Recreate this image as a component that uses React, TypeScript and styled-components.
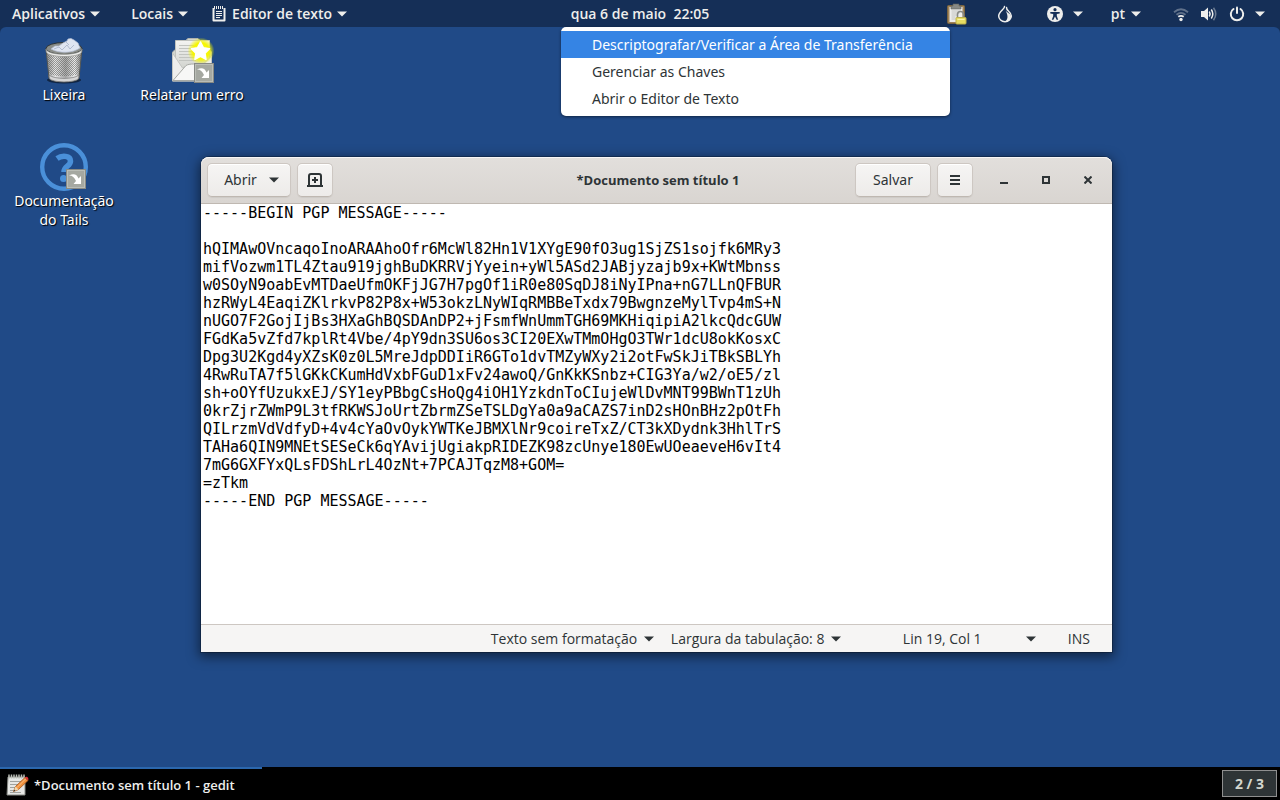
import React, { useState } from "react";
import styled, { createGlobalStyle, css } from "styled-components";

const GlobalStyle = createGlobalStyle`
  *, *::before, *::after { box-sizing: border-box; }
  body {
    margin: 0;
    background: #000;
    font-family: "Noto Sans", "Open Sans", sans-serif;
    font-size: 14px;
    line-height: 18px;
    color: #2e3436;
  }
  button, textarea { font: inherit; color: inherit; }
  svg { display: block; flex: none; }
`;

const Screen = styled.div`
  display: flex;
  flex-direction: column;
  min-height: 100vh;
  background: #152f57;
  overflow: hidden;
`;

/* ---------- top bar ---------- */

const TopBar = styled.header`
  display: grid;
  grid-template-columns: 1fr auto 1fr;
  height: 27px;
  color: #eeeeec;
  font-family: "Open Sans", "Noto Sans", sans-serif;
  font-weight: 600;
  text-shadow: 0 1px 2px rgba(0, 0, 0, 0.7);
`;

const BarGroup = styled.div<{ $end?: boolean }>`
  display: flex;
  justify-content: ${(p) => (p.$end ? "flex-end" : "flex-start")};
`;

const BarButton = styled.button<{ $before?: number; $after?: number; $gap?: number }>`
  display: flex;
  align-items: center;
  gap: ${(p) => p.$gap ?? 5}px;
  padding: 0 ${(p) => p.$after ?? 16}px 0 ${(p) => p.$before ?? 12}px;
  border: 0;
  background: none;
  white-space: nowrap;
`;

const StatusIcons = styled.span`
  display: flex;
  gap: 12px;
`;

/* ---------- desktop ---------- */

const Desktop = styled.main`
  position: relative;
  flex: 1;
  background: #204a87;
  border-radius: 6px 6px 0 0;
`;

const IconGrid = styled.div`
  display: grid;
  grid-template-columns: repeat(2, 128px);
  grid-auto-rows: 106px;
  padding-top: 10px;
`;

const Shortcut = styled.button`
  display: flex;
  flex-direction: column;
  align-items: center;
  padding: 0;
  border: 0;
  background: none;
  color: #fff;
  line-height: 19px;
  text-shadow: 1px 1px 1px #000;
`;

const ShortcutLabel = styled.span`
  max-width: 112px;
`;

const Menu = styled.div`
  position: absolute;
  top: 0;
  right: 330px;
  z-index: 2;
  width: 389px;
  padding: 4px 0;
  background: #fff;
  border-radius: 5px;
  box-shadow: 0 1px 3px rgba(0, 0, 0, 0.5);
`;

const MenuItem = styled.button<{ $active: boolean }>`
  display: block;
  width: 100%;
  height: 27px;
  padding: 0 31px;
  border: 0;
  text-align: left;
  background: ${(p) => (p.$active ? "#3584e4" : "transparent")};
  color: ${(p) => (p.$active ? "#fff" : "#2e3436")};
`;

/* ---------- editor window ---------- */

const Window = styled.section`
  position: absolute;
  top: 130px;
  left: 201px;
  right: 168px;
  display: flex;
  flex-direction: column;
  border-radius: 8px 8px 0 0;
  background: #fff;
  box-shadow: 0 0 0 1px rgba(0, 0, 0, 0.25), 0 3px 12px 2px rgba(0, 0, 0, 0.5);
`;

const HeaderBar = styled.header`
  display: grid;
  grid-template-columns: 1fr auto 1fr;
  align-items: center;
  height: 47px;
  padding: 0 3px 0 6px;
  border-bottom: 1px solid #bfb8b1;
  border-radius: 8px 8px 0 0;
  background: linear-gradient(#e2dfdc, #d9d5d1);
  box-shadow: inset 0 1px #f8f7f6;
`;

const HeaderGroup = styled.div<{ $end?: boolean }>`
  display: flex;
  align-items: center;
  gap: 6px;
  justify-content: ${(p) => (p.$end ? "flex-end" : "flex-start")};
`;

const Title = styled.h1`
  margin: 0;
  font-family: "Open Sans", "Noto Sans", sans-serif;
  font-size: 13px;
  font-weight: 700;
`;

const raised = css`
  border: 1px solid #cdc7c2;
  border-bottom-color: #bfb8b1;
  background: linear-gradient(#f6f5f4, #edebe9);
  box-shadow: inset 0 1px #fff, 0 1px 1px rgba(0, 0, 0, 0.06);
`;

const HeaderButton = styled.button<{ $width: number; $menu?: boolean }>`
  ${raised}
  display: flex;
  align-items: center;
  justify-content: center;
  gap: 12px;
  width: ${(p) => p.$width}px;
  height: 34px;
  padding: 0 0 0 ${(p) => (p.$menu ? 5 : 0)}px;
  border-radius: 5px;
`;

const WindowControls = styled.div`
  display: flex;
  padding-left: 4px;
`;

const WindowControl = styled.button`
  display: grid;
  place-items: center;
  width: 42px;
  height: 34px;
  padding: 0;
  border: 0;
  background: none;
`;

const Editor = styled.textarea`
  display: block;
  height: 420px;
  padding: 0 2px;
  border: 0;
  outline: 0;
  resize: none;
  background: #fff;
  color: #000;
  font-family: "DejaVu Sans Mono", monospace;
  font-size: 15px;
  line-height: 18px;
  white-space: pre;
  overflow: hidden;
`;

const StatusBar = styled.footer`
  display: flex;
  justify-content: flex-end;
  align-items: center;
  height: 28px;
  padding-right: 22px;
  border-top: 1px solid #cdc7c2;
  background: #f6f5f4;
`;

const StatusButton = styled.button<{ $width: number; $after: number }>`
  display: flex;
  align-items: center;
  justify-content: space-between;
  width: ${(p) => p.$width}px;
  margin-right: ${(p) => p.$after}px;
  padding: 0;
  border: 0;
  background: none;
  font-family: "Open Sans", "Noto Sans", sans-serif;
  white-space: nowrap;
`;

const InputMode = styled.span`
  font-family: "Open Sans", "Noto Sans", sans-serif;
`;

/* ---------- bottom panel ---------- */

const Taskbar = styled.footer`
  display: flex;
  justify-content: space-between;
  align-items: stretch;
  height: 33px;
  background: #000;
`;

const Task = styled.button`
  display: flex;
  align-items: center;
  gap: 4px;
  width: 262px;
  padding: 0 6px;
  border: 0;
  border-top: 2px solid #2b67ad;
  background: none;
  color: #eeeeec;
  font-family: "Open Sans", "Noto Sans", sans-serif;
  font-size: 13px;
  font-weight: 600;
`;

const Pager = styled.button`
  width: 55px;
  margin: 3px;
  padding: 0;
  border: 1px solid #8f8f8f;
  background: #2e3436;
  color: #d3d7cf;
  font-family: "Open Sans", "Noto Sans", sans-serif;
  font-weight: 700;
`;

/* ---------- drawings ---------- */

const Caret = () => (
  <svg width="10" height="6" viewBox="0 0 10 6" aria-hidden="true">
    <path d="M0 .5h10L5 5.5z" fill="currentColor" />
  </svg>
);

const NotepadIcon = () => (
  <svg width="16" height="18" viewBox="0 0 16 18" fill="none" stroke="currentColor" aria-hidden="true">
    <path d="M2.500 3v12.500h11V3" strokeWidth="2" strokeLinejoin="round" />
    <path d="M3.500 1v3M5.500 1v3M7.500 1v3M9.500 1v3M11.500 1v3" />
    <path d="M5 6.500h6M5 8.500h6M5 10.500h6M5 12.500h4" />
  </svg>
);

const ClipboardLockIcon = () => (
  <svg width="20" height="22" viewBox="0 0 20 22" aria-hidden="true">
    <rect x=".5" y="2.5" width="17" height="18" rx="1" fill="#a08358" stroke="#7b6540" />
    <path d="M2.500 4h13v15h-13z" fill="#eeeeec" />
    <path d="M4.500 8h9M4.500 10h8M4.500 12h6M4.500 14h4M4.500 16h4" stroke="#c2c4c0" />
    <path d="M6 1h6v2h2v3H4V3h2z" fill="#888a85" stroke="#60625f" strokeWidth=".6" />
    <path d="M10.500 14.500v-3a3 3 0 0 1 6 0v3" fill="none" stroke="#888a85" strokeWidth="1.600" />
    <rect x="9" y="14.500" width="10" height="6.500" rx=".8" fill="#e6dc62" stroke="#bcb04a" />
    <path d="M10.500 16.500h7" stroke="#f8f2a6" />
  </svg>
);

const OnionIcon = () => (
  <svg width="16" height="18" viewBox="0 0 16 18" aria-hidden="true">
    <path d="M7.500 1.500C8 4 1.700 6.500 1.700 11a6.300 5.700 0 0 0 12.600 0c0-4.500-5-5-4.800-8.500" fill="none" stroke="currentColor" strokeWidth="1.500" strokeLinecap="round" />
    <path d="M8.500 5.500c1 2 5.500 3 5.500 6 0 3-2.500 5-5.500 5 3-3 2.300-7 0-11z" fill="currentColor" />
  </svg>
);

const AccessIcon = () => (
  <svg width="16" height="16" viewBox="0 0 16 16" aria-hidden="true">
    <circle cx="8" cy="8" r="8" fill="currentColor" />
    <circle cx="8" cy="3.700" r="1.600" fill="#152f57" />
    <path d="M3.300 6h9.400v1.400L9.800 8v2l1.400 3.700h-1.600L8 10.500l-1.600 3.200H4.800L6.200 10V8l-2.900-.6z" fill="#152f57" />
  </svg>
);

const WifiIcon = () => (
  <svg width="16" height="16" viewBox="0 0 16 16" fill="none" stroke="currentColor" strokeWidth="1.800" aria-hidden="true">
    <path d="M1 6.200q7-6 14 0" opacity=".35" />
    <path d="M3.500 8.800q4.500-3.800 9 0" opacity=".35" />
    <path d="M5.300 10.800q2.700-2 5.400 0" />
    <circle cx="8" cy="13.500" r="1.700" fill="currentColor" stroke="none" />
  </svg>
);

const VolumeIcon = () => (
  <svg width="16" height="16" viewBox="0 0 16 16" fill="none" stroke="currentColor" strokeWidth="1.500" aria-hidden="true">
    <path d="M0 5h3l4-3.500v13L3 11H0z" fill="currentColor" stroke="none" />
    <path d="M8.300 5.500q1.600 2.500 0 5" />
    <path d="M10.300 3.500q3 4.500 0 9" />
    <path d="M12.500 1.800q4.500 6.200 0 12.400" opacity=".4" />
  </svg>
);

const PowerIcon = () => (
  <svg width="16" height="16" viewBox="0 0 16 16" fill="none" stroke="currentColor" strokeWidth="2" strokeLinecap="round" aria-hidden="true">
    <path d="M4.500 3a6.200 6.200 0 1 0 7 0" />
    <path d="M8 1.500v5.500" />
  </svg>
);

const TrashIcon = () => (
  <svg width="48" height="48" viewBox="0 0 48 48" aria-hidden="true">
    <defs>
      <linearGradient id="metal" x1="0" x2="1" y1="0" y2="0">
        <stop offset="0" stopColor="#8b8b8b" />
        <stop offset=".25" stopColor="#e6e6e6" />
        <stop offset=".55" stopColor="#a9a9a9" />
        <stop offset=".8" stopColor="#f0f0f0" />
        <stop offset="1" stopColor="#777" />
      </linearGradient>
      <pattern id="mesh" width="2" height="2" patternUnits="userSpaceOnUse">
        <path d="M0 0h1v1H0zM1 1h1v1H1z" fill="#555753" opacity=".55" />
      </pattern>
    </defs>
    <ellipse cx="24" cy="43" rx="17" ry="3.500" fill="#000" opacity=".5" />
    <path d="M6 12l3 29c1 5 29 5 30 0l3-29z" fill="url(#metal)" stroke="#555753" />
    <path d="M7 17l2.500 20c5 3 24 3 29 0L41 17c-8 4-26 4-34 0z" fill="url(#mesh)" />
    <path d="M9 38c5 4.500 25 4.500 30 0l-.5 3.500c-3 4.500-26 4.500-29 0z" fill="#d6d6d6" stroke="#777" strokeWidth=".7" />
    <ellipse cx="24" cy="11.500" rx="18" ry="6" fill="#8a8d88" stroke="#2e3436" />
    <path d="M11 12l4-3 4 0 4-3 4-2 1-2 3-.5 3 1.500 4 3 2 5c-7 5-20 6-29 1z" fill="#dfe5f1" stroke="#b5bfd4" strokeWidth=".7" />
    <path d="M14 12l5-2 3 3 5-5 3 4 4-4M26 5l3 3" fill="none" stroke="#a4b0c8" strokeWidth=".8" />
    <path d="M6 12c1 7 35 7 36 0l-.3 3c-2 6-33 6-35.400 0z" fill="#eeeeec" stroke="#888a85" strokeWidth=".7" />
  </svg>
);

const LinkEmblem = () => (
  <g>
    <rect x=".5" y=".5" width="19" height="19" fill="#a5a8a1" stroke="#888a85" />
    <rect x="1.500" y="1.500" width="17" height="17" fill="none" stroke="#babdb6" />
    <path d="M3 6.500c5-2.500 8-1 9.500 3l2.500-2.500v8H7.500L10 12C8.500 8.500 6.500 6.500 3 6.500z" fill="#fff" />
  </g>
);

const ReportIcon = () => (
  <svg width="48" height="48" viewBox="0 0 48 48" aria-hidden="true">
    <defs>
      <radialGradient id="glow">
        <stop offset="0" stopColor="#ffff30" />
        <stop offset=".6" stopColor="#f5f500" />
        <stop offset="1" stopColor="#f5f500" stopOpacity="0" />
      </radialGradient>
      <linearGradient id="paper" x1="0" x2="0" y1="0" y2="1">
        <stop offset="0" stopColor="#f4f4f2" />
        <stop offset="1" stopColor="#cfd1cc" />
      </linearGradient>
    </defs>
    <path d="M4.500 15L20 1.500h10L43.500 15v29h-39z" fill="#d3d7cf" stroke="#b0b2ae" />
    <path d="M7.500 3.500h34v30h-34z" fill="url(#paper)" stroke="#c0c2be" />
    <path d="M11 8.500h15M11 11.500h17M11 14.500h13M11 17.500h16M11 20.500h20M11 23.500h17" stroke="#c2c4c0" />
    <path d="M4.500 16l10 15 6-3h14l9-9v25h-39z" fill="#eeeeec" stroke="#c4c6c2" />
    <path d="M5 43.500l13-15c3-2 12-2 15 0l10 15z" fill="#f7f7f6" stroke="#a8aaa5" />
    <circle cx="33" cy="14" r="13.500" fill="url(#glow)" />
    <path d="M32.500 5l2.800 5.700 6.200 1-4.500 4.400 1 6.300-5.500-3-5.600 3 1-6.300-4.500-4.400 6.200-1z" fill="#fff" stroke="#fff" strokeLinejoin="round" strokeWidth="1.500" />
    <g transform="translate(26 26)"><LinkEmblem /></g>
  </svg>
);

const HelpIcon = () => (
  <svg width="48" height="48" viewBox="0 0 48 48" fill="none" aria-hidden="true">
    <circle cx="24" cy="24" r="21.800" stroke="#4a90d9" strokeWidth="4.400" />
    <path d="M17 15.500c5-3.500 13.500-3 13.500 2.500 0 5.500-6.500 5-6.500 11" stroke="#4a90d9" strokeWidth="5.500" />
    <circle cx="23.500" cy="35.500" r="3.500" fill="#4a90d9" />
    <g transform="translate(26 26)"><LinkEmblem /></g>
  </svg>
);

const NewTabIcon = () => (
  <svg width="16" height="14" viewBox="0 0 16 14" fill="none" stroke="currentColor" strokeWidth="2" aria-hidden="true">
    <path d="M0 13h16M2 13V3q0-2 2-2h8q2 0 2 2v10" />
    <path d="M8 4v6M5 7h6" />
  </svg>
);

const MenuIcon = () => (
  <svg width="10" height="10" viewBox="0 0 10 10" stroke="currentColor" strokeWidth="2" aria-hidden="true">
    <path d="M0 1h10M0 5h10M0 9h10" />
  </svg>
);

const ControlIcon = ({ path }: { path: string }) => (
  <svg width="8" height="8" viewBox="0 0 8 8" fill="none" stroke="currentColor" strokeWidth="2" aria-hidden="true">
    <path d={path} />
  </svg>
);

const GeditIcon = () => (
  <svg width="24" height="24" viewBox="0 0 24 24" aria-hidden="true">
    <path d="M2 4h17v18H1z" fill="#e6e7e5" stroke="#888a85" />
    <path d="M3 1.500v4M5.500 1.500v4M8 1.500v4M10.500 1.500v4M13 1.500v4M15.500 1.500v4M18 1.500v4" stroke="#babdb6" strokeWidth="1.500" />
    <path d="M4 8.500h12M4 11.500h10M4 14.500h5M4 17.500h5M4 19.500h11" stroke="#a0a29e" />
    <path d="M7.500 18.500l2-5 9.500-9 3 3-9.500 9z" fill="#f0913c" stroke="#a5541a" strokeWidth=".8" />
    <path d="M11 14.500l9-9" stroke="#fcc188" />
    <path d="M19 4.500c1.500-2 4.500.5 3 3z" fill="#e0303a" />
    <path d="M7.500 18.500l2-5 3 3z" fill="#f0d8b0" />
    <path d="M7.500 18.500l.8-2 1.200 1.200z" fill="#2e3436" />
  </svg>
);

/* ---------- content ---------- */

const MESSAGE = `-----BEGIN PGP MESSAGE-----

hQIMAwOVncaqoInoARAAhoOfr6McWl82Hn1V1XYgE90fO3ug1SjZS1sojfk6MRy3
mifVozwm1TL4Ztau919jghBuDKRRVjYyein+yWl5ASd2JABjyzajb9x+KWtMbnss
w0SOyN9oabEvMTDaeUfmOKFjJG7H7pgOf1iR0e80SqDJ8iNyIPna+nG7LLnQFBUR
hzRWyL4EaqiZKlrkvP82P8x+W53okzLNyWIqRMBBeTxdx79BwgnzeMylTvp4mS+N
nUGO7F2GojIjBs3HXaGhBQSDAnDP2+jFsmfWnUmmTGH69MKHiqipiA2lkcQdcGUW
FGdKa5vZfd7kplRt4Vbe/4pY9dn3SU6os3CI20EXwTMmOHgO3TWr1dcU8okKosxC
Dpg3U2Kgd4yXZsK0z0L5MreJdpDDIiR6GTo1dvTMZyWXy2i2otFwSkJiTBkSBLYh
4RwRuTA7f5lGKkCKumHdVxbFGuD1xFv24awoQ/GnKkKSnbz+CIG3Ya/w2/oE5/zl
sh+oOYfUzukxEJ/SY1eyPBbgCsHoQg4iOH1YzkdnToCIujeWlDvMNT99BWnT1zUh
0krZjrZWmP9L3tfRKWSJoUrtZbrmZSeTSLDgYa0a9aCAZS7inD2sHOnBHz2pOtFh
QILrzmVdVdfyD+4v4cYaOvOykYWTKeJBMXlNr9coireTxZ/CT3kXDydnk3HhlTrS
TAHa6QIN9MNEtSESeCk6qYAvijUgiakpRIDEZK98zcUnye180EwUOeaeveH6vIt4
7mG6GXFYxQLsFDShLrL4OzNt+7PCAJTqzM8+GOM=
=zTkm
-----END PGP MESSAGE-----`;

const MENU_ITEMS = [
  "Descriptografar/Verificar a Área de Transferência",
  "Gerenciar as Chaves",
  "Abrir o Editor de Texto",
];

export default function App() {
  const [text, setText] = useState(MESSAGE);
  const [active, setActive] = useState(0);

  return (
    <>
      <GlobalStyle />
      <Screen>
        <TopBar>
          <BarGroup>
            <BarButton>Aplicativos <Caret /></BarButton>
            <BarButton $before={15} $after={15}>Locais <Caret /></BarButton>
            <BarButton $before={8}><NotepadIcon />Editor de texto <Caret /></BarButton>
          </BarGroup>
          <BarButton $after={12}>qua 6 de maio&nbsp; 22:05</BarButton>
          <BarGroup $end>
            <BarButton $before={15} $after={15} aria-label="OpenPGP"><ClipboardLockIcon /></BarButton>
            <BarButton $before={15} $after={17} aria-label="Tor"><OnionIcon /></BarButton>
            <BarButton $before={17} $after={14} $gap={10} aria-label="Acessibilidade"><AccessIcon /><Caret /></BarButton>
            <BarButton $before={14} $after={16} $gap={6}>pt <Caret /></BarButton>
            <BarButton $before={16} $after={15} $gap={10} aria-label="Sistema">
              <StatusIcons><WifiIcon /><VolumeIcon /><PowerIcon /></StatusIcons>
              <Caret />
            </BarButton>
          </BarGroup>
        </TopBar>

        <Desktop>
          <IconGrid>
            <Shortcut><TrashIcon /><ShortcutLabel>Lixeira</ShortcutLabel></Shortcut>
            <Shortcut><ReportIcon /><ShortcutLabel>Relatar um erro</ShortcutLabel></Shortcut>
            <Shortcut><HelpIcon /><ShortcutLabel>Documentação do Tails</ShortcutLabel></Shortcut>
          </IconGrid>

          <Menu role="menu">
            {MENU_ITEMS.map((item, i) => (
              <MenuItem key={item} role="menuitem" $active={i === active} onMouseEnter={() => setActive(i)}>
                {item}
              </MenuItem>
            ))}
          </Menu>

          <Window>
            <HeaderBar>
              <HeaderGroup>
                <HeaderButton $width={84} $menu>Abrir <Caret /></HeaderButton>
                <HeaderButton $width={36} aria-label="Nova aba"><NewTabIcon /></HeaderButton>
              </HeaderGroup>
              <Title>*Documento sem título 1</Title>
              <HeaderGroup $end>
                <HeaderButton $width={76}>Salvar</HeaderButton>
                <HeaderButton $width={36} aria-label="Menu"><MenuIcon /></HeaderButton>
                <WindowControls>
                  <WindowControl aria-label="Minimizar"><ControlIcon path="M0 7h8" /></WindowControl>
                  <WindowControl aria-label="Maximizar"><ControlIcon path="M1 1h6v6H1z" /></WindowControl>
                  <WindowControl aria-label="Fechar"><ControlIcon path="M.5 .5l7 7M7.500 .5l-7 7" /></WindowControl>
                </WindowControls>
              </HeaderGroup>
            </HeaderBar>
            <Editor
              aria-label="Documento sem título 1"
              spellCheck={false}
              value={text}
              onChange={(e) => setText(e.target.value)}
            />
            <StatusBar>
              <StatusButton $width={163} $after={17}>Texto sem formatação <Caret /></StatusButton>
              <StatusButton $width={170} $after={62}>Largura da tabulação: 8 <Caret /></StatusButton>
              <StatusButton $width={133} $after={32}>Lin 19, Col 1 <Caret /></StatusButton>
              <InputMode>INS</InputMode>
            </StatusBar>
          </Window>
        </Desktop>

        <Taskbar>
          <Task><GeditIcon />*Documento sem título 1 - gedit</Task>
          <Pager>2 / 3</Pager>
        </Taskbar>
      </Screen>
    </>
  );
}
